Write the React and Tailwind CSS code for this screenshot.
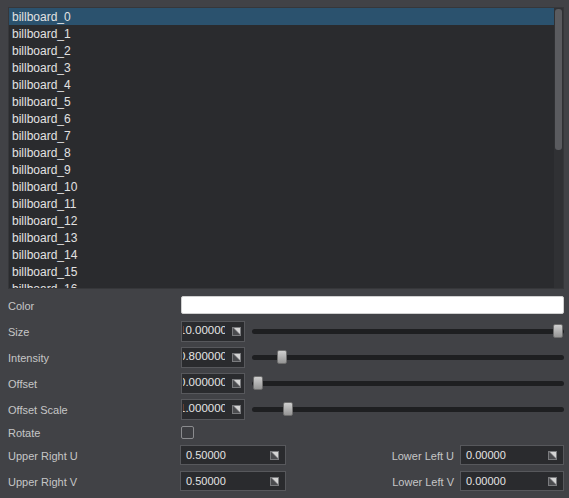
import React from 'react'

const items = Array.from({ length: 17 }, (_, i) => `billboard_${i}`)

const SpinIcon = () => (
  <svg width="9" height="9" viewBox="0 0 9 9" className="shrink-0">
    <rect x="0" y="0" width="9" height="9" fill="#7a7b7e" />
    <polygon points="1,1 8,8 1,8" fill="#4a4b4e" />
    <polygon points="2,1 8,1 8,7" fill="#d4d4d4" />
  </svg>
)

const SpinBox = ({ value }) => (
  <div className="w-[64px] h-[21px] bg-[#2a2b2e] border border-[#57585c] flex items-center pr-[3px] shrink-0">
    <div className="w-[42px] ml-[1px] overflow-hidden whitespace-nowrap text-[11.5px] text-[#e4e4e4] leading-none">
      <span className="inline-block -ml-[4px]">{value}</span>
    </div>
    <div className="flex-1" />
    <SpinIcon />
  </div>
)

const Slider = ({ pos }) => (
  <div className="flex-1 ml-[7px] mr-[5px] relative h-[14px] flex items-center">
    <div className="w-full h-[5px] rounded-full bg-[#1e1f21]" />
    <div
      className="absolute top-0 w-[10px] h-[14px] rounded-[2px] bg-gradient-to-b from-[#cfcfcf] to-[#959595] border border-[#6e6e6e]"
      style={{ left: pos }}
    />
  </div>
)

const Field = ({ value, w }) => (
  <div className={`${w} h-[20px] bg-[#2a2b2e] border border-[#57585c] flex items-center pl-[5px] pr-[6px] text-[11px] text-[#e4e4e4]`}>
    <span className="flex-1">{value}</span>
    <SpinIcon />
  </div>
)

const Label = ({ children }) => (
  <div className="w-[181px] pl-[8px] pt-[2px] text-[11px] text-[#c6c6c6] shrink-0">{children}</div>
)

export default function App() {
  const sliders = [
    { label: 'Size', value: '10.000000', pos: 301 },
    { label: 'Intensity', value: '0.800000', pos: 25 },
    { label: 'Offset', value: '0.000000', pos: 1 },
    { label: 'Offset Scale', value: '1.000000', pos: 31 },
  ]

  return (
    <div className="w-[569px] h-[498px] bg-[#414246] overflow-hidden font-['Liberation_Sans',_Arial,_sans-serif]">
      <div className="pt-[7px] pl-[8px] pr-[5px]">
        <div className="h-[282px] border border-[#36373a] bg-[#2a2b2e] flex overflow-hidden">
          <div className="flex-1 overflow-hidden">
            {items.map((name, i) => (
              <div
                key={name}
                className={`h-[17px] pl-[3px] flex items-center text-[12px] text-[#e2e2e2] whitespace-nowrap ${
                  i === 0 ? 'bg-[#2b526e]' : ''
                }`}
              >
                {name}
              </div>
            ))}
          </div>
          <div className="w-[9px] bg-[#303134] pt-[1px] flex justify-center">
            <div className="w-[7px] h-[141px] rounded-[3px] bg-[#5a5b5f]" />
          </div>
        </div>
      </div>

      <div className="mt-[3px] flex flex-col">
        <div className="h-[26px] flex items-center">
          <Label>Color</Label>
          <div className="flex-1 mr-[5px] h-[18px] bg-white rounded-[2px] border border-[#d0d0d0]" />
        </div>

        {sliders.map((s) => (
          <div key={s.label} className="h-[26px] flex items-center">
            <Label>{s.label}</Label>
            <SpinBox value={s.value} />
            <Slider pos={s.pos} />
          </div>
        ))}

        <div className="h-[20px] flex items-center">
          <Label>Rotate</Label>
          <div className="w-[13px] h-[13px] border border-[#8a8b8e] rounded-[2px] bg-[#3d3e42]" />
        </div>

        <div className="h-[26px] flex items-center">
          <Label>Upper Right U</Label>
          <div className="-ml-[1px]">
            <Field value="0.50000" w="w-[106px]" />
          </div>
          <div className="flex-1 text-right pr-[6px] pt-[2px] text-[11px] text-[#c6c6c6]">Lower Left U</div>
          <div className="mr-[5px]">
            <Field value="0.00000" w="w-[104px]" />
          </div>
        </div>

        <div className="h-[26px] flex items-center">
          <Label>Upper Right V</Label>
          <div className="-ml-[1px]">
            <Field value="0.50000" w="w-[106px]" />
          </div>
          <div className="flex-1 text-right pr-[6px] pt-[2px] text-[11px] text-[#c6c6c6]">Lower Left V</div>
          <div className="mr-[5px]">
            <Field value="0.00000" w="w-[104px]" />
          </div>
        </div>
      </div>
    </div>
  )
}
